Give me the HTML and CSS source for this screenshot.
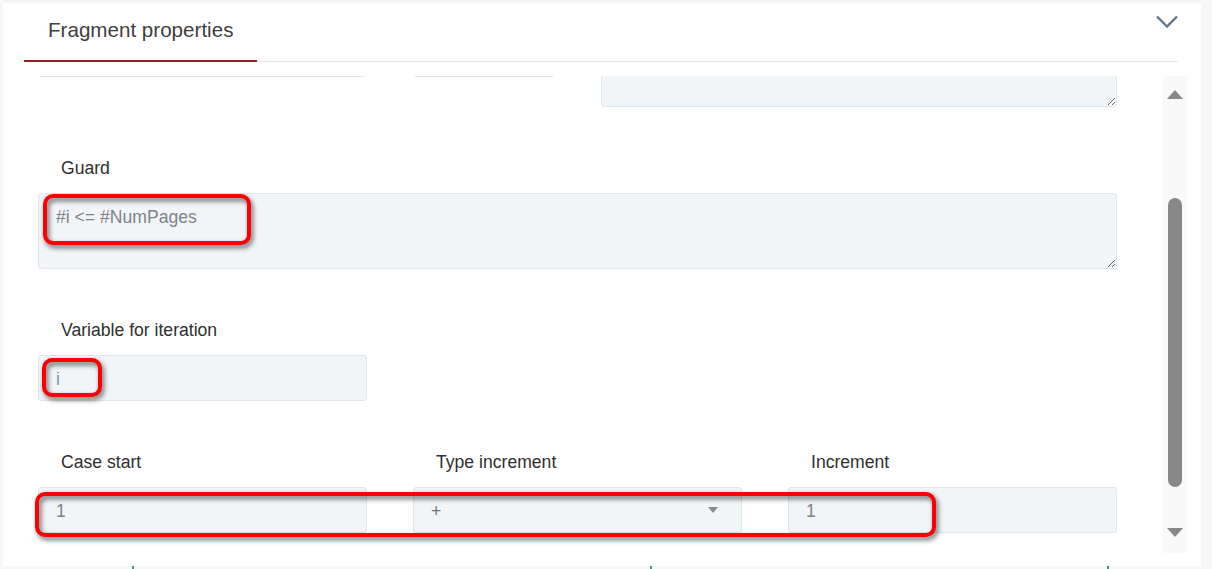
FILE: index.html
```html
<!DOCTYPE html>
<html>
<head>
<meta charset="utf-8">
<title>Fragment properties</title>
<link rel="stylesheet" href="styles.css">
</head>
<body>
<div class="panel">
  <div class="header">
    <div class="tab">Fragment properties</div>
    <svg class="chevron" width="22" height="13" viewBox="0 0 22 13"><path d="M1 1.5 L11 11.5 L21 1.5" fill="none" stroke="#5f7287" stroke-width="2.3"/></svg>
  </div>
  <div class="scroll-view">
    <div class="form">
      <div class="row-top">
        <input class="field" type="text">
        <input class="field" type="text">
        <textarea class="area area-top"></textarea>
      </div>

      <div class="group">
        <label class="label">Guard</label>
        <div class="anchor">
          <textarea class="area area-guard">#i &lt;= #NumPages</textarea>
          <div class="mark mark-guard"></div>
        </div>
      </div>

      <div class="group">
        <div class="grid3">
          <div>
            <label class="label">Variable for iteration</label>
            <div class="anchor">
              <input class="field field-var" type="text" value="i">
              <div class="mark mark-var"></div>
            </div>
          </div>
        </div>
      </div>

      <div class="group">
        <div class="grid3">
          <label class="label">Case start</label>
          <label class="label">Type increment</label>
          <label class="label">Increment</label>
        </div>
        <div class="grid3 anchor">
          <input class="field" type="text" value="1">
          <div class="select"><span>+</span><span class="caret"></span></div>
          <input class="field" type="text" value="1">
          <div class="mark mark-row"></div>
        </div>
      </div>
    </div>
    <div class="scrollbar">
      <div class="arrow-up"></div>
      <div class="thumb"></div>
      <div class="arrow-down"></div>
    </div>
  </div>
</div>
<div class="ticks">
  <span class="tick t1"></span>
  <span class="tick t2"></span>
  <span class="tick t3"></span>
</div>
</body>
</html>
```
FILE: styles.css
```css
html, body {
  margin: 0;
  padding: 0;
}
body {
  background: #f7f7f7;
  font-family: "Liberation Sans", Arial, sans-serif;
  overflow: hidden;
  width: 1212px;
  height: 569px;
}
.panel {
  margin-left: 3px;
  width: 1198px;
  height: 566px;
  box-sizing: border-box;
  padding: 0 14px 0 21px;
  background: linear-gradient(#efefef, #ffffff 4px);
}
.header {
  display: flex;
  justify-content: space-between;
  align-items: flex-start;
  height: 61px;
  border-bottom: 1px solid #e6e6e6;
  margin-right: 9px;
}
.tab {
  width: 233px;
  height: 62px;
  box-sizing: border-box;
  padding: 18px 0 0 24px;
  font-size: 20.6px;
  line-height: 24px;
  color: #3f3f3f;
  border-bottom: 2px solid #9a1f1f;
}
.chevron {
  margin-top: 15px;
  display: block;
}
.scroll-view {
  margin-top: 14px;
  height: 477px;
  overflow: hidden;
  display: flex;
}
.form {
  width: 1079px;
  margin-left: 14px;
  margin-top: -45px;
  font-size: 17.6px;
}
.row-top {
  display: grid;
  grid-template-columns: 329px 142px 1fr;
  column-gap: 46px;
  align-items: start;
}
.group {
  margin-top: 51px;
}
.label {
  display: block;
  padding-left: 23px;
  line-height: 20px;
  margin-bottom: 15px;
  color: #2f2f2f;
  font-size: 17.6px;
}
.grid3 {
  display: grid;
  grid-template-columns: repeat(3, 329px);
  column-gap: 46px;
}
.anchor {
  position: relative;
}
.field, .area, .select {
  box-sizing: border-box;
  width: 100%;
  background: #f2f5f8;
  border: 1px solid #e1e6eb;
  border-radius: 3px;
  font-family: "Liberation Sans", Arial, sans-serif;
  font-size: 17.6px;
  color: #7f8388;
  outline: none;
  margin: 0;
}
.field {
  display: block;
  height: 46px;
  padding: 2px 17px 0;
}
.field-var {
  color: #7f94aa;
}
.area {
  display: block;
  padding: 11px 17px;
  line-height: 25px;
  resize: vertical;
}
.area-top {
  height: 76px;
}
.area-guard {
  height: 76px;
}
.select {
  height: 46px;
  display: flex;
  align-items: center;
  justify-content: space-between;
  padding: 2px 23px 0 17px;
  color: #6e737a;
}
.caret {
  width: 0;
  height: 0;
  border-left: 5px solid transparent;
  border-right: 5px solid transparent;
  border-top: 6px solid #8a8a8a;
  margin-top: -2px;
}
.mark {
  position: absolute;
  box-sizing: border-box;
  border: 4px solid #ff0000;
  border-radius: 10px;
  filter: drop-shadow(2px 3px 2.5px rgba(0, 0, 0, 0.6));
  pointer-events: none;
}
.mark-guard {
  left: 5px;
  top: 1px;
  width: 208px;
  height: 51px;
}
.mark-var {
  left: 4px;
  top: 3px;
  width: 60px;
  height: 39px;
}
.mark-row {
  left: -3px;
  top: 5px;
  width: 901px;
  height: 45px;
}
.scrollbar {
  margin-left: auto;
  width: 24px;
  height: 477px;
  background: #f9f9f9;
  display: flex;
  flex-direction: column;
  align-items: center;
  box-sizing: border-box;
  padding-top: 14px;
}
.arrow-up {
  width: 0;
  height: 0;
  border-left: 8px solid transparent;
  border-right: 8px solid transparent;
  border-bottom: 9px solid #888;
}
.thumb {
  margin-top: 99px;
  width: 14px;
  height: 289px;
  border-radius: 7px;
  background: #888;
}
.arrow-down {
  margin-top: 41px;
  width: 0;
  height: 0;
  border-left: 8px solid transparent;
  border-right: 8px solid transparent;
  border-top: 9px solid #888;
}
.ticks {
  display: flex;
  height: 3px;
}
.tick {
  width: 2px;
  height: 3px;
  background: #3f9a72;
}
.t1 { margin-left: 132px; }
.t2 { margin-left: 516px; }
.t3 { margin-left: 455px; }
```
